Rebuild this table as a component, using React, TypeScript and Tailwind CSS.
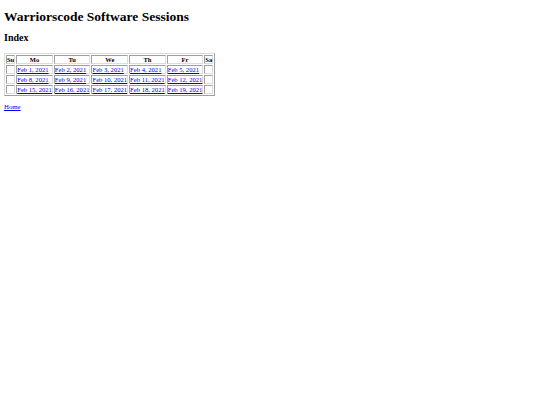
const weeks = [
  ['Feb 1, 2021', 'Feb 2, 2021', 'Feb 3, 2021', 'Feb 4, 2021', 'Feb 5, 2021'],
  ['Feb 8, 2021', 'Feb 9, 2021', 'Feb 10, 2021', 'Feb 11, 2021', 'Feb 12, 2021'],
  ['Feb 15, 2021', 'Feb 16, 2021', 'Feb 17, 2021', 'Feb 18, 2021', 'Feb 19, 2021'],
];

const days = ['Su', 'Mo', 'Tu', 'We', 'Th', 'Fr', 'Sa'];

const cell = 'border border-[#a0a0a0] border-b-[#dcdcdc] border-r-[#dcdcdc] p-0 leading-[7px]';

export default function App() {
  return (
    <div className="min-h-[405px] bg-white p-[4px] font-['Liberation_Serif',serif] text-[7px] text-black">
      <h1 className="mt-[5px] text-[13.5px] leading-[16px] font-bold">Warriorscode Software Sessions</h1>
      <h2 className="mt-[7px] text-[10px] leading-[12px] font-bold">Index</h2>
      <table className="mt-[9px] border-separate border-spacing-[1px] border border-[#a0a0a0] border-t-[#dcdcdc] border-l-[#dcdcdc]">
        <thead>
          <tr>
            {days.map((d) => (
              <th
                key={d}
                className={`${cell} text-[6.5px] font-bold ${
                  d === 'Su' || d === 'Sa' ? '' : 'w-[35px]'
                }`}>
                {d}
              </th>
            ))}
          </tr>
        </thead>
        <tbody>
          {weeks.map((w, i) => (
            <tr key={i}>
              <td className={cell} />
              {w.map((d) => (
                <td key={d} className={`${cell} text-[6.6px] whitespace-nowrap`}>
                  <a href="#" className="text-[#0000ee] underline">
                    {d}
                  </a>
                </td>
              ))}
              <td className={cell} />
            </tr>
          ))}
        </tbody>
      </table>
      <p className="mt-[7px] text-[6.8px] leading-[8px]">
        <a href="#" className="text-[#0000ee] underline">
          Home
        </a>
      </p>
    </div>
  );
}
